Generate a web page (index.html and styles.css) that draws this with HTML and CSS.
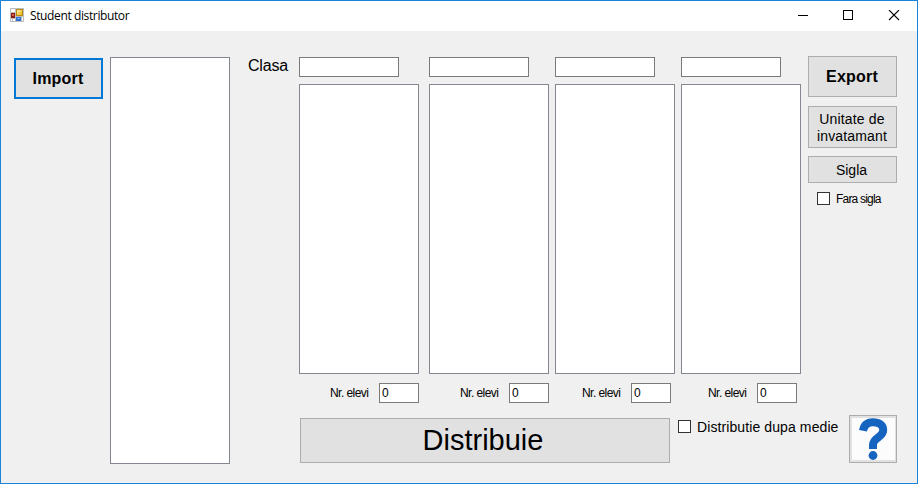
FILE: index.html
```html
<!DOCTYPE html>
<html lang="ro">
<head>
<meta charset="utf-8">
<title>Student distributor</title>
<link rel="stylesheet" href="styles.css">
</head>
<body>
<div class="window">
  <header class="titlebar">
    <svg class="app-icon" width="14" height="14" viewBox="0 0 14 14" shape-rendering="crispEdges">
      <defs>
        <linearGradient id="gold" x2="1" y2="1"><stop offset="0" stop-color="#fff0b0"/><stop offset="1" stop-color="#edb008"/></linearGradient>
      </defs>
      <path fill="#bdbdbd" d="M0 0h14v14H0z"/>
      <path fill="#fff" d="M1 1h4v3H1zM1 11h1v2h-1zM3 11h2v2h-2zM12 9h1v4h-1z"/>
      <path fill="#b98a10" d="M6 1h7v7H6z"/>
      <path fill="url(#gold)" d="M7 2h5v5H7z"/>
      <path fill="#8c1a12" d="M1 5h4v5H1z"/>
      <path fill="#d9604f" d="M2 6h2v2H2z"/>
      <path fill="#2f6fd0" d="M6 9h5v4H6z"/>
      <path fill="#76b0f5" d="M7 10h3v1H7z"/>
    </svg>
    <span class="title">Student distributor</span>
    <svg class="controls" width="104" height="12" viewBox="0 0 104 12" shape-rendering="crispEdges">
      <path d="M0 5.5h10" stroke="#000"/>
      <path d="M45.5 .5h9v9h-9z" fill="none" stroke="#000"/>
      <path d="M91 0l10 10M101 0l-10 10" stroke="#000" stroke-width="1.1" shape-rendering="auto"/>
    </svg>
  </header>
  <main class="content">
    <button class="btn import"><span>Import</span></button>
    <div class="list students"></div>
    <section class="workspace">
      <div class="classes">
        <label class="clasa">Clasa</label>
        <div class="class-col first">
          <div class="field name"></div>
          <div class="list"></div>
          <div class="count"><span>Nr. elevi</span><div class="field num">0</div></div>
        </div>
        <div class="class-col second">
          <div class="field name"></div>
          <div class="list"></div>
          <div class="count"><span>Nr. elevi</span><div class="field num">0</div></div>
        </div>
        <div class="class-col">
          <div class="field name"></div>
          <div class="list"></div>
          <div class="count near"><span>Nr. elevi</span><div class="field num">0</div></div>
        </div>
        <div class="class-col">
          <div class="field name"></div>
          <div class="list"></div>
          <div class="count near"><span>Nr. elevi</span><div class="field num">0</div></div>
        </div>
        <aside class="side">
          <button class="btn export"><span>Export</span></button>
          <button class="btn unit"><span>Unitate de<br>invatamant</span></button>
          <button class="btn sigla"><span>Sigla</span></button>
          <label class="check small"><i class="box"></i><span>Fara sigla</span></label>
        </aside>
      </div>
      <div class="actions">
        <button class="btn distribute"><span>Distribuie</span></button>
        <label class="check average"><i class="box"></i><span>Distributie dupa medie</span></label>
        <button class="btn help" aria-label="Ajutor">
          <svg width="43" height="42" viewBox="0 0 43 42">
            <path fill="#fcfcfc" d="M0 0h43v42H0z"/>
            <path d="M11 12.800C12 7 15.500 4.300 21 4.300c6 0 10.200 2.700 10.200 7.700 0 7.500-10.200 7.500-10.200 15v4" fill="none" stroke="#1565c0" stroke-width="8"/>
            <circle cx="21" cy="37.500" r="4.400" fill="#1565c0"/>
          </svg>
        </button>
      </div>
    </section>
  </main>
</div>
</body>
</html>
```

FILE: styles.css
```css
* { box-sizing: border-box; }

body {
  margin: 0;
  color: #000;
  font-family: "Liberation Sans", sans-serif;
}

.window {
  width: 918px;
  height: 484px;
  border: 1px solid #1883d7;
  background: #f0f0f0;
  overflow: hidden;
}

.titlebar {
  display: flex;
  height: 30px;
  padding: 0 18px 0 9px;
  background: #fff;
}

.app-icon { margin-top: 7px; }

.title {
  margin-left: 6px;
  font: 12px/30px "Open Sans", sans-serif;
  letter-spacing: -0.38px;
  white-space: nowrap;
}

.controls {
  margin: 9px -3px 0 auto;
}

.content {
  display: flex;
  align-items: flex-start;
  padding: 25px 20px 0 13px;
}

.btn {
  display: flex;
  align-items: center;
  justify-content: center;
  flex: none;
  width: 89px;
  margin: 0;
  padding: 0;
  border: 1px solid #adadad;
  background: #e1e1e1;
  color: #000;
  font-family: inherit;
  font-size: 14px;
  line-height: 17px;
  white-space: nowrap;
}

.import,
.export {
  height: 41px;
  padding-right: 1px;
  font-size: 16px;
  font-weight: bold;
  letter-spacing: 0.2px;
}

.import {
  margin-top: 2px;
  border: 2px solid #0078d7;
}

.list {
  width: 120px;
  height: 290px;
  border: 1px solid #828790;
  background: #fff;
}

.students {
  height: 407px;
  margin: 1px 18px 0 7px;
}

.classes {
  display: flex;
  align-items: flex-start;
}

.clasa {
  width: 51px;
  font-size: 16px;
  line-height: 19px;
  letter-spacing: -0.2px;
}

.class-col {
  width: 120px;
  margin: 1px 6px 0 0;
}

.class-col.first { margin-right: 10px; }

.field {
  height: 20px;
  border: 1px solid #7a7a7a;
  background: #fff;
}

.name {
  width: 100px;
  margin-bottom: 7px;
}

.count {
  display: flex;
  margin: 9px 0 0 31px;
  font-size: 12px;
  line-height: 20px;
  letter-spacing: -0.55px;
}

.count.near { margin-left: 27px; }

.count span { width: 49px; white-space: nowrap; }

.num {
  width: 40px;
  padding-left: 2px;
  line-height: 18px;
}

.side { margin-left: 1px; }

.unit {
  height: 42px;
  margin-top: 9px;
  padding: 2px 1px 0 0;
  letter-spacing: 0.15px;
}

.sigla {
  height: 27px;
  margin-top: 8px;
  padding: 2px 2px 0 0;
}

.check {
  display: flex;
  white-space: nowrap;
}

.box {
  width: 13px;
  height: 13px;
  margin-right: 6px;
  border: 1px solid #333;
  background: #fff;
}

.small {
  margin: 9px 0 0 9px;
  font-size: 12px;
  line-height: 14px;
  letter-spacing: -0.8px;
}

.actions {
  display: flex;
  align-items: flex-start;
  margin: 12px 0 0 52px;
}

.distribute {
  width: 370px;
  height: 45px;
  margin-top: 3px;
  padding: 0 4px 2px 0;
  font-size: 29px;
  line-height: 34px;
}

.average {
  margin: 5px 0 0 8px;
  font-size: 14px;
  line-height: 14px;
  letter-spacing: 0.1px;
}

.help {
  width: 48px;
  height: 48px;
  margin-left: auto;
}
```
